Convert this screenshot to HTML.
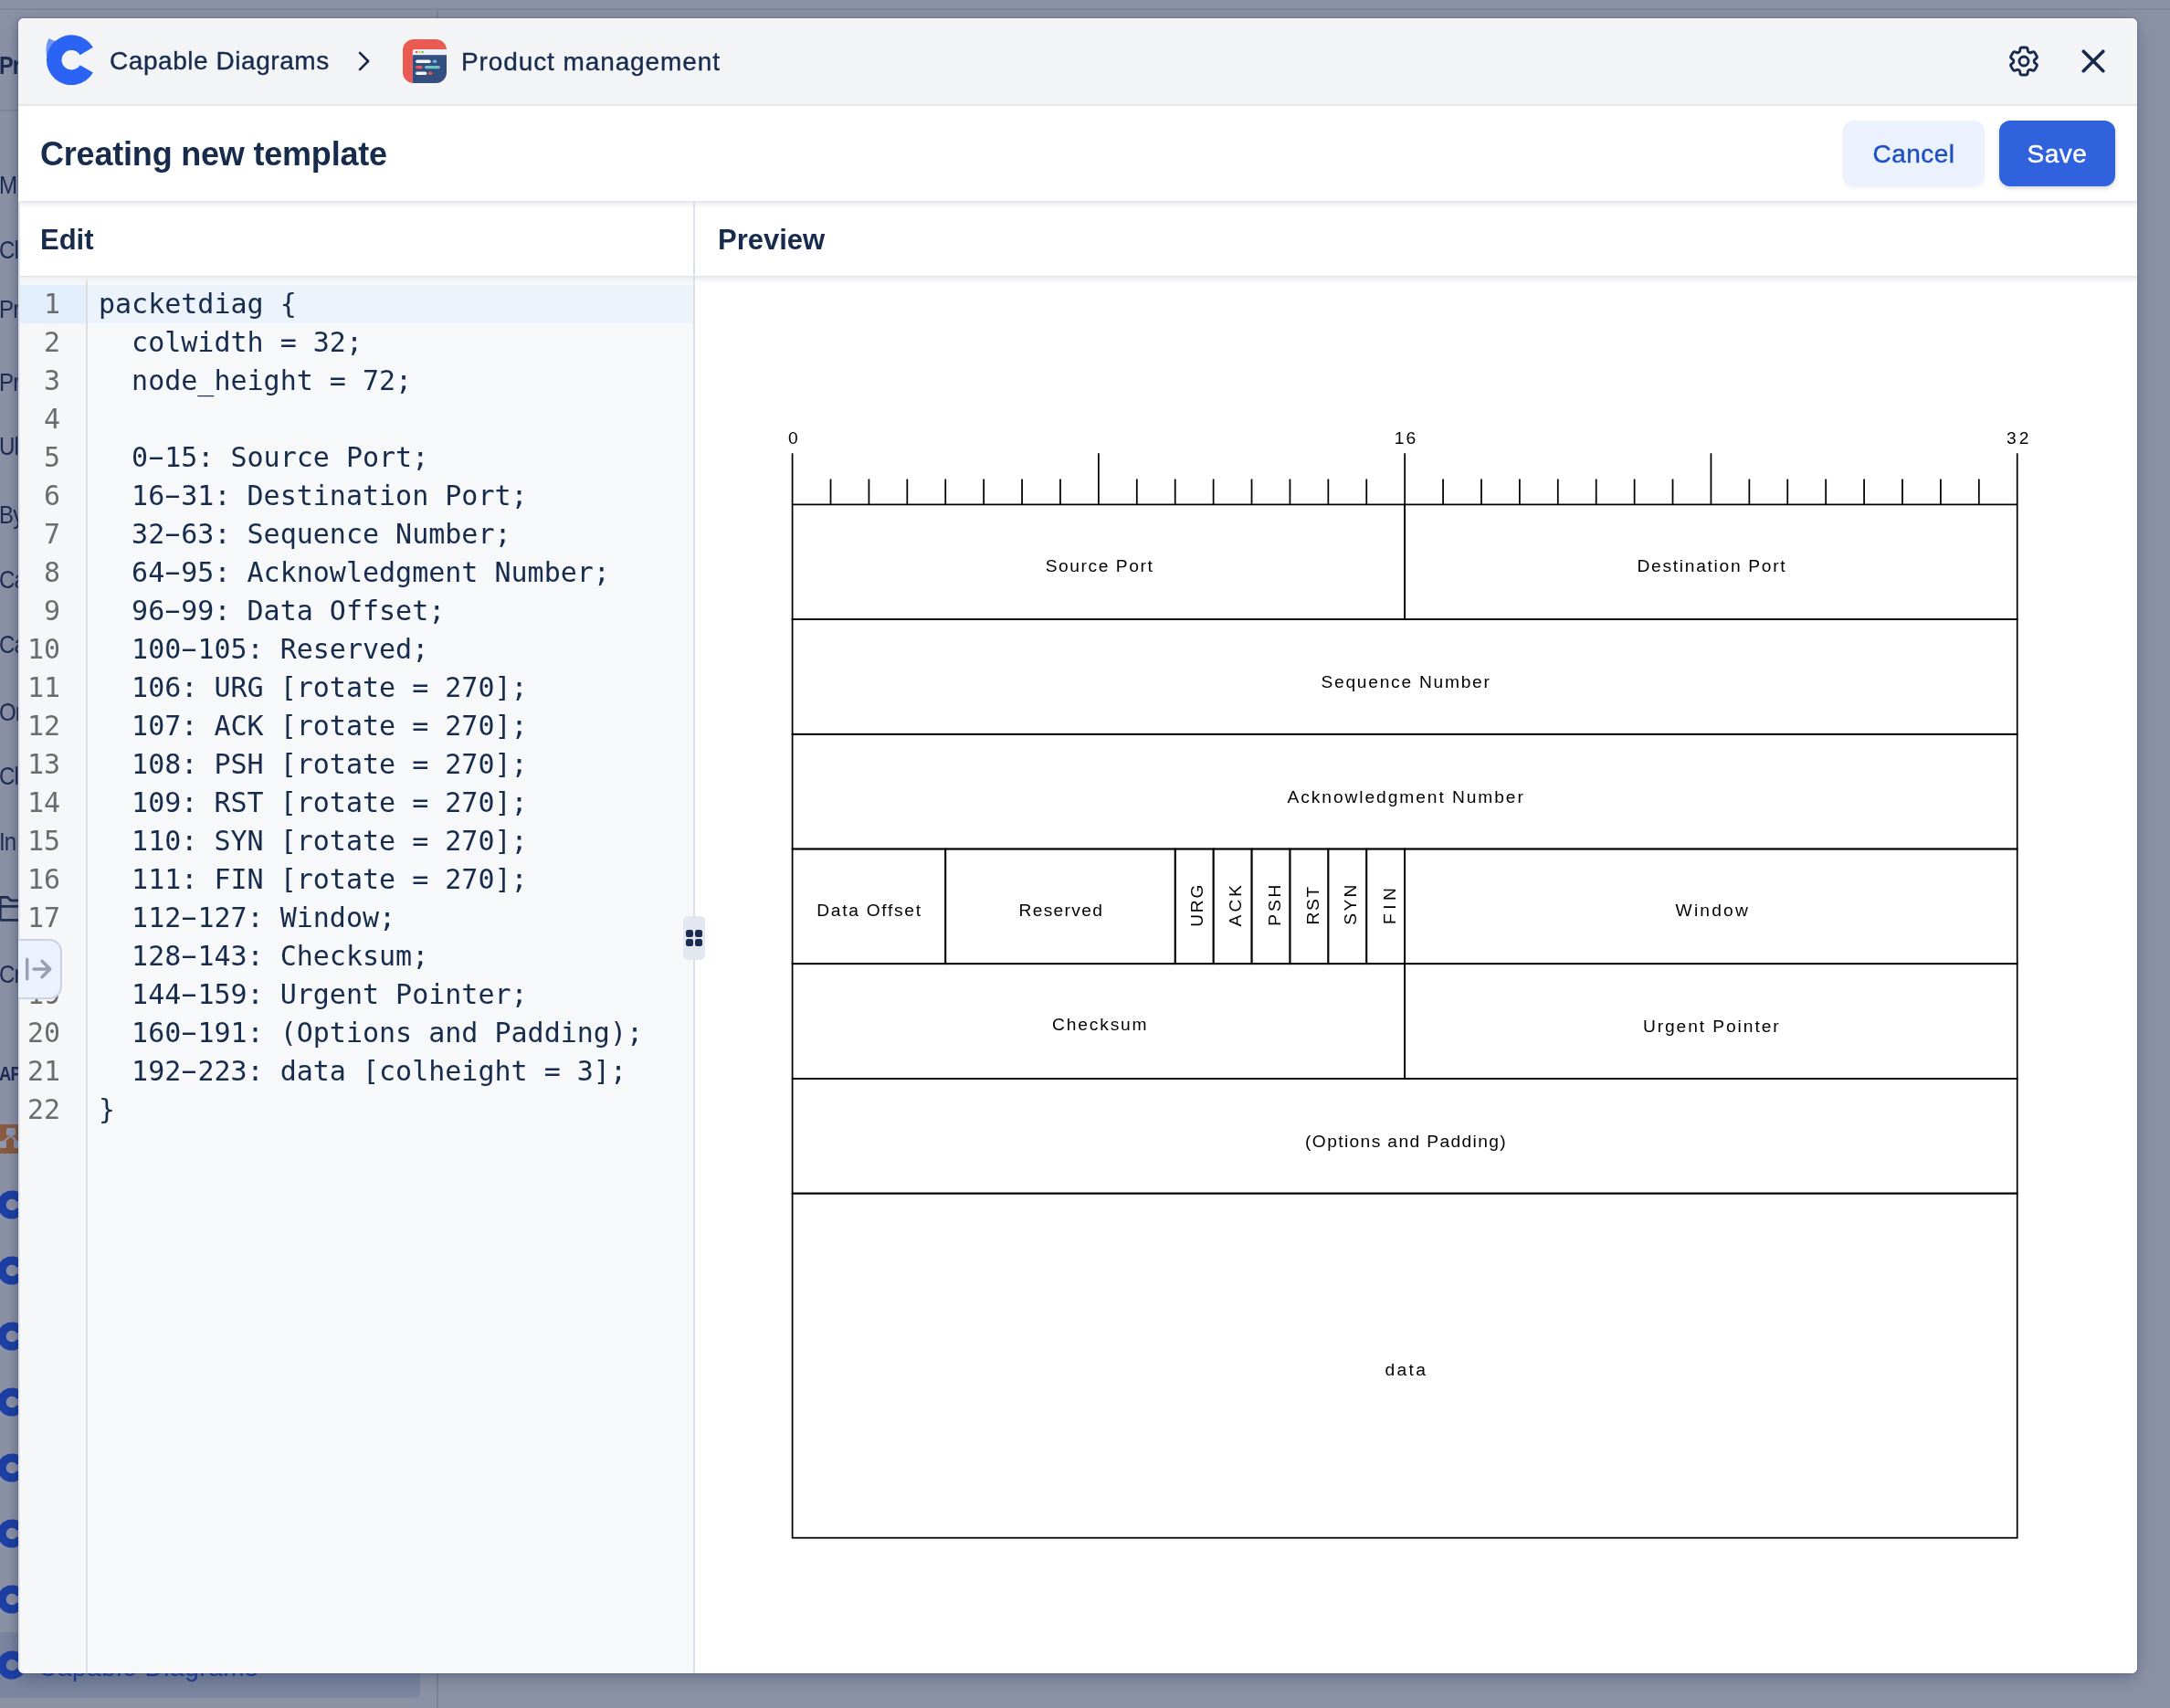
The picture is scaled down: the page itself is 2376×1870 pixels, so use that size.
<!DOCTYPE html>
<html lang="en"><head><meta charset="utf-8"><title>Creating new template</title>
<style>
*{box-sizing:border-box;margin:0;padding:0}
html,body{width:2376px;height:1870px;overflow:hidden}
body{position:relative;background:#8c92a6;font-family:"Liberation Sans",sans-serif;color:#172b4d}
.abs{position:absolute}
/* background page fragments */
.bgline-h{position:absolute;left:0;top:9px;width:2376px;height:2px;background:#7f869d}
.bgline-v{position:absolute;left:478px;top:11px;width:2px;height:1859px;background:#7b8299}
.bgrow{position:absolute;left:0;top:1787px;width:460px;height:72px;background:#7a859f;border-radius:0 6px 6px 0}
.strip{position:absolute;left:0;top:0;width:20px;height:1870px;overflow:hidden;color:#1f2d54;font-size:28px;white-space:nowrap;letter-spacing:-1px}
.strip span{position:absolute;left:-1px;line-height:40px;transform:scaleX(.86);transform-origin:0 0}
.strip b{position:absolute;left:-1px;line-height:40px;font-size:28px;transform:scaleX(.84);transform-origin:0 0}
/* modal */
.modal{position:absolute;left:20px;top:20px;width:2320px;height:1812px;border-radius:6px;background:#fff;overflow:hidden;
 box-shadow:0 0 0 1px rgba(9,30,66,.10),0 6px 18px 0 rgba(9,30,66,.26),-3px 0 8px 0 rgba(9,30,66,.10)}
.inner{position:absolute;left:-20px;top:-20px;width:2376px;height:1870px}
.hdr{position:absolute;left:20px;top:20px;width:2320px;height:94px;background:#f3f4f6}
.hdrline{position:absolute;left:20px;top:114px;width:2320px;height:2px;background:#e4e6ea}
.crumb{position:absolute;top:48px;font-size:28px;line-height:40px;color:#172b4d;white-space:nowrap;-webkit-text-stroke:.35px #172b4d}
.title{position:absolute;left:44px;top:147px;font-size:36px;line-height:44px;font-weight:700;color:#172b4d;white-space:nowrap;letter-spacing:-.2px}
.btn{position:absolute;top:132px;height:72px;border-radius:12px;font-size:28px;line-height:74px;text-align:center;white-space:nowrap;letter-spacing:.5px}
.btn.cancel{left:2018px;width:155px;background:#ebf1fd;color:#1d4ec2;-webkit-text-stroke:.4px #1d4ec2;box-shadow:0 2px 4px rgba(9,30,66,.06)}
.btn.save{left:2189px;width:127px;background:#2f62dc;color:#fff;-webkit-text-stroke:.4px #fff;box-shadow:0 2px 5px rgba(9,30,66,.18)}
.titleshadow{position:absolute;left:20px;top:220px;width:2320px;height:8px;background:linear-gradient(#dfe2e9,#eef0f4 30%,#fff)}
.ph{position:absolute;top:243px;font-size:31px;line-height:40px;font-weight:700;color:#172b4d;white-space:nowrap}
.phshadow{position:absolute;left:20px;top:302px;width:2320px;height:8px;background:linear-gradient(#dfe2e9,#eef0f4 30%,rgba(255,255,255,0));z-index:3}
.leftborder{position:absolute;left:20px;top:222px;width:2px;height:1610px;background:#dfe2e8;z-index:4}
.divider{position:absolute;left:759px;top:222px;width:2px;height:1610px;background:#dcdfe6;z-index:4}
.handle{position:absolute;left:748px;top:1003px;width:24px;height:48px;border-radius:5px;background:#e3e7f0;z-index:5}
.handle i{position:absolute;width:8px;height:8px;border-radius:2.5px;background:#1b2b52}
/* editor */
.editor{position:absolute;left:22px;top:302px;width:737px;height:1530px;background:#f7f8fa;overflow:hidden}
.gutter{position:absolute;left:0;top:0;width:74px;height:100%;background:#f6f7f9;border-right:2px solid #dcdddf}
.activeline{position:absolute;left:74px;top:10px;width:663px;height:42px;background:#ecf3fb}
.activegutter{position:absolute;left:0;top:10px;width:72px;height:42px;background:#e3eefc}
.lnums{position:absolute;left:0;top:10px;width:44px;text-align:right;font-family:"DejaVu Sans Mono","Liberation Mono",monospace;font-size:30px;line-height:42px;color:#6c6c6c}
.code{position:absolute;left:86px;top:10px;font-family:"DejaVu Sans Mono","Liberation Mono",monospace;font-size:30px;line-height:42px;color:#172b4d;white-space:pre}
.toggle{position:absolute;left:0px;top:1028px;width:68px;height:66px;border-radius:14px;background:#ebf1fd;border:2px solid #c9d2e6;z-index:6}
/* preview */
.preview{position:absolute;left:761px;top:302px;width:1579px;height:1530px;background:#fff}
svg text{font-family:"Liberation Sans",sans-serif}

.hy{display:inline-block;transform:translateY(-1.5px) scaleX(1.85)}
.bgtext{position:absolute;left:42px;top:1806px;font-size:28px;line-height:40px;color:#1e40a5;letter-spacing:.55px;white-space:nowrap}
.inner,.strip,.bgtext{will-change:transform}

</style></head>
<body>
<div class="bgline-h"></div><div class="bgline-h" style="top:120px;width:478px"></div><div class="bgline-v"></div><div class="bgrow"></div>
<div class="bgtext">Capable Diagrams</div>
<div class="strip">
<b style="top:52px">Pr</b>
<span style="top:183px">M</span>
<span style="top:254px">Cl</span>
<span style="top:319px">Pr</span>
<span style="top:399px">Pr</span>
<span style="top:469px">Ul</span>
<span style="top:544px">By</span>
<span style="top:615px">Ca</span>
<span style="top:686px">Ca</span>
<span style="top:760px">Or</span>
<span style="top:830px">Cl</span>
<span style="top:902px">In</span>
<span style="top:1047px">Cr</span>
<b style="top:1156px;font-size:22px">AP</b>
</div>
<svg class="abs" style="left:0;top:0" width="40" height="1870" viewBox="0 0 40 1870">
<path d="M.3 1007.3V982.4H8.4L11.6 985.9H24M.3 992.4H24M.3 1007.3H24" fill="none" stroke="#222f55" stroke-width="2.8" stroke-linejoin="round"/>
<rect x="-4" y="1231" width="24" height="32" fill="#8a5b3e"/>
<g fill="#8d97b1"><rect x="7" y="1235" width="10" height="8" rx="1.5"/><rect x="0" y="1249" width="7" height="8" rx="1.5"/><rect x="15" y="1249" width="8" height="8" rx="1.5"/></g>
<path d="M12 1243L4 1250M12 1243L18 1250" stroke="#8d97b1" stroke-width="2" fill="none"/>
<g fill="#1e40a5"><path d="M26.4 1311.1A15.6 15.6 0 1 0 26.4 1326.9L18.4 1322.2A6.3 6.3 0 1 1 18.4 1315.8Z"/><path d="M26.4 1383.1A15.6 15.6 0 1 0 26.4 1398.9L18.4 1394.2A6.3 6.3 0 1 1 18.4 1387.8Z"/><path d="M26.4 1455.1A15.6 15.6 0 1 0 26.4 1470.9L18.4 1466.2A6.3 6.3 0 1 1 18.4 1459.8Z"/><path d="M26.4 1527.1A15.6 15.6 0 1 0 26.4 1542.9L18.4 1538.2A6.3 6.3 0 1 1 18.4 1531.8Z"/><path d="M26.4 1599.1A15.6 15.6 0 1 0 26.4 1614.9L18.4 1610.2A6.3 6.3 0 1 1 18.4 1603.8Z"/><path d="M26.4 1671.1A15.6 15.6 0 1 0 26.4 1686.9L18.4 1682.2A6.3 6.3 0 1 1 18.4 1675.8Z"/><path d="M26.4 1743.1A15.6 15.6 0 1 0 26.4 1758.9L18.4 1754.2A6.3 6.3 0 1 1 18.4 1747.8Z"/><path d="M26.4 1815.1A15.6 15.6 0 1 0 26.4 1830.9L18.4 1826.2A6.3 6.3 0 1 1 18.4 1819.8Z"/></g>
</svg>
<div class="modal">
<div class="inner">
<div class="hdr"></div><div class="hdrline"></div>
<svg class="abs" style="left:40px;top:30px" width="80" height="80" viewBox="40 30 80 80">
<path d="M53.4 42Q49 51 51.2 62L62.5 46Z" fill="#6e94f5"/>
<path d="M101.9 51.8A27.4 27.4 0 1 0 101.9 79.6L87.6 71.2A10.8 10.8 0 1 1 87.6 60.2Z" fill="#2b63f4"/>
</svg>
<div class="crumb" style="left:120px;top:47px;letter-spacing:.55px">Capable Diagrams</div>
<svg class="abs" style="left:380px;top:47px" width="40" height="40" viewBox="380 47 40 40"><path d="M394 57.9L403.1 67L394 76.1" fill="none" stroke="#14244a" stroke-width="2.6" stroke-linecap="round" stroke-linejoin="round"/></svg>
<svg class="abs" style="left:441px;top:43px" width="48" height="48" viewBox="441 43 48 48">
<defs><clipPath id="appclip"><rect x="441" y="43" width="48" height="48" rx="12"/></clipPath></defs>
<g clip-path="url(#appclip)">
<rect x="441" y="43" width="48" height="48" fill="#eb5a50"/>
<path d="M451.8 91V56.4a2.5 2.5 0 0 1 2.5-2.5H489V91Z" fill="#edf1f9"/>
<rect x="451.8" y="60.2" width="38" height="31" fill="#334f80"/>
<circle cx="456.1" cy="57" r="1.15" fill="#e8453c"/><circle cx="459.4" cy="57" r="1.15" fill="#f4b73f"/><circle cx="462.6" cy="57" r="1.15" fill="#4cc24a"/>
<rect x="455.1" y="65.4" width="16.6" height="3.5" rx="1.75" fill="#f4f6fb"/><rect x="473.8" y="65.4" width="4.5" height="3.5" rx="1.75" fill="#6fb1e8"/>
<rect x="455.1" y="71.9" width="7.8" height="3.4" rx="1.7" fill="#eb5a50"/><rect x="464.9" y="71.9" width="17" height="3.4" rx="1.7" fill="#6ec4c4"/>
<rect x="455.1" y="78.5" width="12.2" height="3.4" rx="1.7" fill="#f4f6fb"/><rect x="469.1" y="78.5" width="4.2" height="3.4" rx="1.7" fill="#ef5544"/>
</g></svg>
<div class="crumb" style="left:505px;letter-spacing:.9px">Product management</div>
<svg class="abs" style="left:2196px;top:47px" width="40" height="40" viewBox="0 0 24 24" fill="none" stroke="#172b4d" stroke-width="1.75" stroke-linecap="round" stroke-linejoin="round">
<path d="M9.594 3.94c.09-.542.56-.94 1.11-.94h2.593c.55 0 1.02.398 1.11.94l.213 1.281c.063.374.313.686.645.87.074.04.147.083.22.127.325.196.72.257 1.075.124l1.217-.456a1.125 1.125 0 0 1 1.37.49l1.296 2.247a1.125 1.125 0 0 1-.26 1.431l-1.003.827c-.293.241-.438.613-.43.992a7.723 7.723 0 0 1 0 .255c-.008.378.137.75.43.991l1.004.827c.424.35.534.955.26 1.43l-1.298 2.247a1.125 1.125 0 0 1-1.369.491l-1.217-.456c-.355-.133-.75-.072-1.076.124a6.47 6.47 0 0 1-.22.128c-.331.183-.581.495-.644.869l-.213 1.281c-.09.543-.56.94-1.11.94h-2.594c-.55 0-1.019-.398-1.11-.94l-.213-1.281c-.062-.374-.312-.686-.644-.87a6.52 6.52 0 0 1-.22-.127c-.325-.196-.72-.257-1.076-.124l-1.217.456a1.125 1.125 0 0 1-1.369-.49l-1.297-2.247a1.125 1.125 0 0 1 .26-1.431l1.004-.827c.292-.24.437-.613.43-.991a6.932 6.932 0 0 1 0-.255c.007-.38-.138-.751-.43-.992l-1.004-.827a1.125 1.125 0 0 1-.26-1.43l1.297-2.247a1.125 1.125 0 0 1 1.37-.491l1.216.456c.356.133.751.072 1.076-.124.072-.044.146-.086.22-.128.332-.183.582-.495.644-.869l.214-1.28Z"/>
<path d="M15 12a3 3 0 1 1-6 0 3 3 0 0 1 6 0Z"/></svg>
<svg class="abs" style="left:2272px;top:47px" width="40" height="40" viewBox="2272 47 40 40"><path d="M2281.3 56.2L2302.8 77.7M2302.8 56.2L2281.3 77.7" fill="none" stroke="#172b4d" stroke-width="3.6" stroke-linecap="round"/></svg>
<div class="title">Creating new template</div>
<div class="btn cancel">Cancel</div>
<div class="btn save">Save</div>
<div class="titleshadow"></div>
<div class="ph" style="left:44px">Edit</div>
<div class="ph" style="left:786px">Preview</div>
<div class="phshadow"></div>
<div class="leftborder"></div>
<div class="divider"></div>
<div class="handle"><i style="left:3px;top:15px"></i><i style="left:13px;top:15px"></i><i style="left:3px;top:25px"></i><i style="left:13px;top:25px"></i></div>
<div class="toggle"><svg class="abs" style="left:0;top:0" width="64" height="62" viewBox="2 1030 64 62"><path d="M29.7 1050.2V1071.8M37 1061H54.8M46 1052.2L54.8 1061L46 1069.8" fill="none" stroke="#989eb1" stroke-width="3.4" stroke-linecap="round" stroke-linejoin="round"/></svg></div>
<div class="editor">
<div class="gutter"></div>
<div class="activeline"></div><div class="activegutter"></div>
<div class="lnums"><div>1</div><div>2</div><div>3</div><div>4</div><div>5</div><div>6</div><div>7</div><div>8</div><div>9</div><div>10</div><div>11</div><div>12</div><div>13</div><div>14</div><div>15</div><div>16</div><div>17</div><div>18</div><div>19</div><div>20</div><div>21</div><div>22</div></div>
<pre class="code">packetdiag {
  colwidth = 32;
  node_height = 72;

  0<span class="hy">-</span>15: Source Port;
  16<span class="hy">-</span>31: Destination Port;
  32<span class="hy">-</span>63: Sequence Number;
  64<span class="hy">-</span>95: Acknowledgment Number;
  96<span class="hy">-</span>99: Data Offset;
  100<span class="hy">-</span>105: Reserved;
  106: URG [rotate = 270];
  107: ACK [rotate = 270];
  108: PSH [rotate = 270];
  109: RST [rotate = 270];
  110: SYN [rotate = 270];
  111: FIN [rotate = 270];
  112<span class="hy">-</span>127: Window;
  128<span class="hy">-</span>143: Checksum;
  144<span class="hy">-</span>159: Urgent Pointer;
  160<span class="hy">-</span>191: (Options and Padding);
  192<span class="hy">-</span>223: data [colheight = 3];
}</pre>
</div>
<div class="preview">
<svg class="diagram" width="1579" height="1530" viewBox="761 302 1579 1530" style="position:absolute;left:0;top:0">
<g fill="none" stroke="#000" stroke-width="1.75" stroke-linecap="butt">
<path d="M867.60 496.20V552.40M909.51 524.40V552.40M951.42 524.40V552.40M993.33 524.40V552.40M1035.24 524.40V552.40M1077.15 524.40V552.40M1119.06 524.40V552.40M1160.97 524.40V552.40M1202.88 496.20V552.40M1244.79 524.40V552.40M1286.70 524.40V552.40M1328.61 524.40V552.40M1370.52 524.40V552.40M1412.43 524.40V552.40M1454.34 524.40V552.40M1496.25 524.40V552.40M1538.16 496.20V552.40M1580.07 524.40V552.40M1621.98 524.40V552.40M1663.89 524.40V552.40M1705.80 524.40V552.40M1747.71 524.40V552.40M1789.62 524.40V552.40M1831.53 524.40V552.40M1873.44 496.20V552.40M1915.35 524.40V552.40M1957.26 524.40V552.40M1999.17 524.40V552.40M2041.08 524.40V552.40M2082.99 524.40V552.40M2124.90 524.40V552.40M2166.81 524.40V552.40M2208.72 496.20V552.40"/>
<rect x="867.60" y="552.40" width="670.56" height="125.70"/>
<rect x="1538.16" y="552.40" width="670.56" height="125.70"/>
<rect x="867.60" y="678.10" width="1341.12" height="125.70"/>
<rect x="867.60" y="803.80" width="1341.12" height="125.70"/>
<rect x="867.60" y="929.50" width="167.64" height="125.70"/>
<rect x="1035.24" y="929.50" width="251.46" height="125.70"/>
<rect x="1286.70" y="929.50" width="41.91" height="125.70"/>
<rect x="1328.61" y="929.50" width="41.91" height="125.70"/>
<rect x="1370.52" y="929.50" width="41.91" height="125.70"/>
<rect x="1412.43" y="929.50" width="41.91" height="125.70"/>
<rect x="1454.34" y="929.50" width="41.91" height="125.70"/>
<rect x="1496.25" y="929.50" width="41.91" height="125.70"/>
<rect x="1538.16" y="929.50" width="670.56" height="125.70"/>
<rect x="867.60" y="1055.20" width="670.56" height="125.70"/>
<rect x="1538.16" y="1055.20" width="670.56" height="125.70"/>
<rect x="867.60" y="1180.90" width="1341.12" height="125.70"/>
<rect x="867.60" y="1306.60" width="1341.12" height="377.10"/>
</g>
<g fill="#000" font-size="19.2">
<text x="863.10" y="486.30">0</text>
<text x="1526.65" y="486.30" letter-spacing="2.100">16</text>
<text x="2196.95" y="486.30" letter-spacing="3.100">32</text>
<text x="1144.70" y="625.80" letter-spacing="1.580">Source Port</text>
<text x="1792.50" y="625.80" letter-spacing="1.707">Destination Port</text>
<text x="1446.50" y="753.10" letter-spacing="1.743">Sequence Number</text>
<text x="1409.50" y="878.90" letter-spacing="1.930">Acknowledgment Number</text>
<text x="894.30" y="1003.00" letter-spacing="1.700">Data Offset</text>
<text x="1115.50" y="1003.00" letter-spacing="1.314">Reserved</text>
<text x="1834.60" y="1003.00" letter-spacing="2.200">Window</text>
<text x="1152.10" y="1127.90" letter-spacing="1.829">Checksum</text>
<text x="1798.90" y="1130.10" letter-spacing="1.924">Urgent Pointer</text>
<text x="1429.10" y="1256.10" letter-spacing="1.380">(Options and Padding)</text>
<text x="1516.50" y="1505.90" letter-spacing="2.334">data</text>
<text transform="translate(1317.00 1014.80) rotate(-90)" letter-spacing="1.800">URG</text>
<text transform="translate(1359.20 1014.50) rotate(-90)" letter-spacing="3.100">ACK</text>
<text transform="translate(1401.80 1013.70) rotate(-90)" letter-spacing="2.800">PSH</text>
<text transform="translate(1443.50 1012.50) rotate(-90)" letter-spacing="1.700">RST</text>
<text transform="translate(1485.30 1012.70) rotate(-90)" letter-spacing="2.300">SYN</text>
<text transform="translate(1528.20 1011.90) rotate(-90)" letter-spacing="4.400">FIN</text>
</g></svg>
</div>
</div>
</div>
</body></html>
